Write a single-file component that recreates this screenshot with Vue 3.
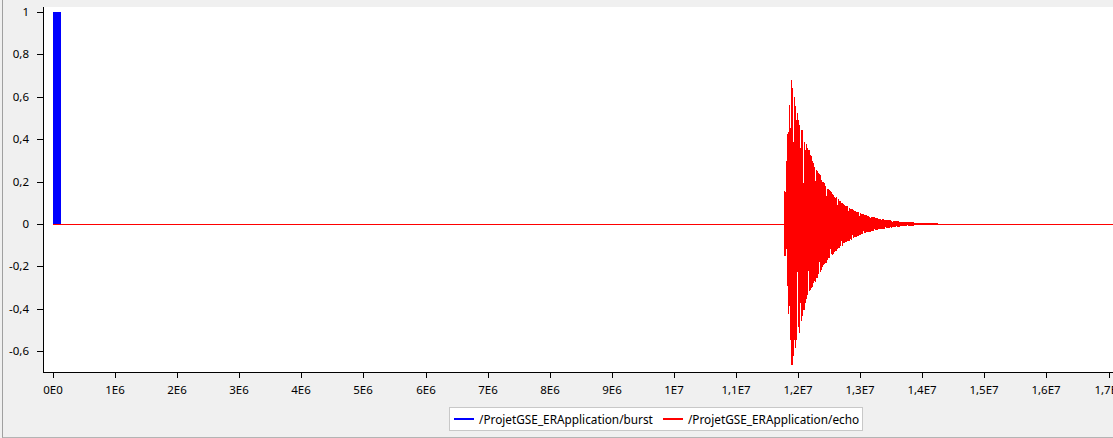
<script setup>
const yTicks = [1, 0.8, 0.6, 0.4, 0.2, 0, -0.2, -0.4, -0.6].map((v) => ({
  label: String(v).replace('.', ','),
  y: Math.round(224 - 212 * v),
}))
const xLabels = ['0E0', '1E6', '2E6', '3E6', '4E6', '5E6', '6E6', '7E6', '8E6', '9E6', '1E7', '1,1E7', '1,2E7', '1,3E7', '1,4E7', '1,5E7', '1,6E7', '1,7E7']
const xTicks = xLabels.map((label, i) => ({ label, x: Math.round(53 + 62.09 * i) }))

const firstTops = [191, 192, 161, 134, 132, 105, 128, 80, 88, 142, 97, 106, 120, 113, 120, 125, 148, 130, 130, 183, 142, 150]
const firstBottoms = [256, 256, 249, 286, 314, 306, 340, 365, 365, 356, 340, 348, 340, 272, 327, 333, 303, 321, 316, 310, 310, 303, 299, 295, 271, 291]

function noise(i) {
  const s = Math.sin(i * 12.9898) * 43758.5453
  return s - Math.floor(s)
}

let d = ''
for (let x = 784; x <= 937; x++) {
  const k = x - 784
  const amp = 144 * Math.exp(-(x - 791) / 27)
  let top = 224 - amp * (0.92 + 0.08 * noise(x))
  let bottom = 224 + amp * (0.92 + 0.08 * noise(x + 500))
  if ((x - 793) % 11 === 0) top = 224 - amp * 0.72
  if ((x - 797) % 11 === 0) bottom = 224 + amp * 0.74
  if (k < firstTops.length) top = firstTops[k]
  if (k < firstBottoms.length) bottom = firstBottoms[k]
  d += `M${x + 0.5} ${Math.round(Math.min(top, 223))}V${Math.round(Math.max(bottom, 225))}`
}
const echoPath = d
</script>

<template>
  <div class="panel">
    <svg class="chart" width="1110" height="400" viewBox="3 0 1110 400">
      <rect x="44" y="7" width="1069" height="365" fill="#fff" />
      <rect x="53" y="12" width="8" height="212" fill="#0000ff" />
      <rect x="53" y="224" width="1060" height="1" fill="#ff0000" />
      <path :d="echoPath" stroke="#ff0000" stroke-width="1" fill="none" shape-rendering="crispEdges" />
      <rect x="43" y="7" width="1" height="366" fill="#000" />
      <rect x="43" y="372" width="1070" height="1" fill="#000" />
      <g v-for="t in yTicks" :key="t.label">
        <rect x="37" :y="t.y" width="6" height="1" fill="#000" />
        <text class="label" x="29" :y="t.y + 4" text-anchor="end">{{ t.label }}</text>
      </g>
      <g v-for="t in xTicks" :key="t.label">
        <rect :x="t.x" y="373" width="1" height="5" fill="#000" />
        <text class="label" :x="t.x" y="394" text-anchor="middle">{{ t.label }}</text>
      </g>
    </svg>
    <div class="legend">
      <div class="legend-item">
        <span class="swatch blue"></span>
        <span>/ProjetGSE_ERApplication/burst</span>
      </div>
      <div class="legend-item">
        <span class="swatch red"></span>
        <span>/ProjetGSE_ERApplication/echo</span>
      </div>
    </div>
  </div>
</template>

<style>
html, body { margin: 0; background: #f0f0f0; overflow: hidden; }
</style>

<style scoped>
.panel {
  box-sizing: border-box;
  width: 1111px;
  height: 438px;
  margin-left: 2px;
  background: #f0f0f0;
  border-left: 1px solid #a0a0a0;
  border-bottom: 1px solid #b4b4b4;
  overflow: hidden;
}
.chart {
  display: block;
}
.label {
  font-family: "Noto Sans", "Liberation Sans", sans-serif;
  font-size: 11.5px;
  fill: #000;
}
.legend {
  box-sizing: border-box;
  display: flex;
  align-items: center;
  gap: 10px;
  width: 414px;
  height: 24px;
  margin: 7px 0 0 446px;
  padding: 0 4px;
  background: #fff;
  border: 1px solid #c8c8c8;
  font-family: "Noto Sans", "Liberation Sans", sans-serif;
  font-size: 11.8px;
  color: #000;
}
.legend-item {
  display: flex;
  align-items: center;
  gap: 5px;
  white-space: nowrap;
}
.swatch {
  width: 20px;
  height: 2px;
}
.blue { background: #0000ff; }
.red { background: #ff0000; }
</style>
